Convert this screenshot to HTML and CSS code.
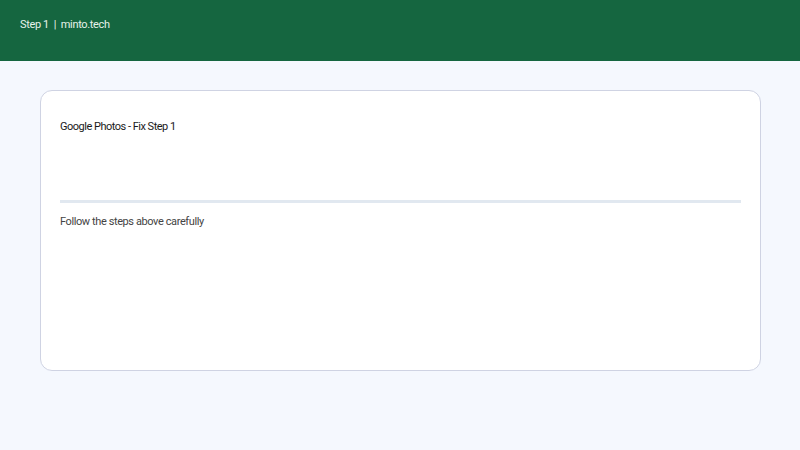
FILE: index.html
```html
<!DOCTYPE html>
<html lang="en">
<head>
    <meta charset="UTF-8">
    <meta name="viewport" content="width=device-width, initial-scale=1.0">
    <title>Step 1 | minto.tech</title>
    <link rel="stylesheet" href="styles.css">
</head>
<body>
    <header class="top-bar">
        <span class="brand">Step 1 &nbsp;|&nbsp; minto.tech</span>
    </header>

    <main class="page">
        <section class="step-card">
            <div class="step-body">
                <h1 class="step-title">Google Photos - Fix Step 1</h1>
            </div>
            <div class="divider"></div>
            <p class="step-note">Follow the steps above carefully</p>
        </section>
    </main>
</body>
</html>
```

FILE: styles.css
```css
body {
    margin: 0;
    font-family: Roboto, "Liberation Sans", Arial, sans-serif;
    background-color: #f5f8fe;
    color: #111;
}
.top-bar {
    height: 61px;
    background-color: #156640;
    padding: 0 20px;
    box-sizing: border-box;
}
.brand {
    display: block;
    padding-top: 18px;
    font-size: 11px;
    letter-spacing: -0.35px;
    color: #e6f2ea;
}
.page {
    padding: 29px 39px 0 40px;
}
.step-card {
    height: 281px;
    box-sizing: border-box;
    background-color: #ffffff;
    border: 1px solid #cfd3e3;
    border-radius: 12px;
    padding: 20px 19px 20px 19px;
}
.step-body {
    height: 89px;
}
.step-title {
    margin: 0;
    padding-top: 9px;
    font-size: 11px;
    font-weight: 400;
    letter-spacing: -0.5px;
    color: #1a1a1a;
}
.divider {
    height: 3px;
    background-color: #e1e8f0;
}
.step-note {
    margin: 12px 0 0;
    font-size: 11px;
    letter-spacing: -0.4px;
    color: #444;
}
```
